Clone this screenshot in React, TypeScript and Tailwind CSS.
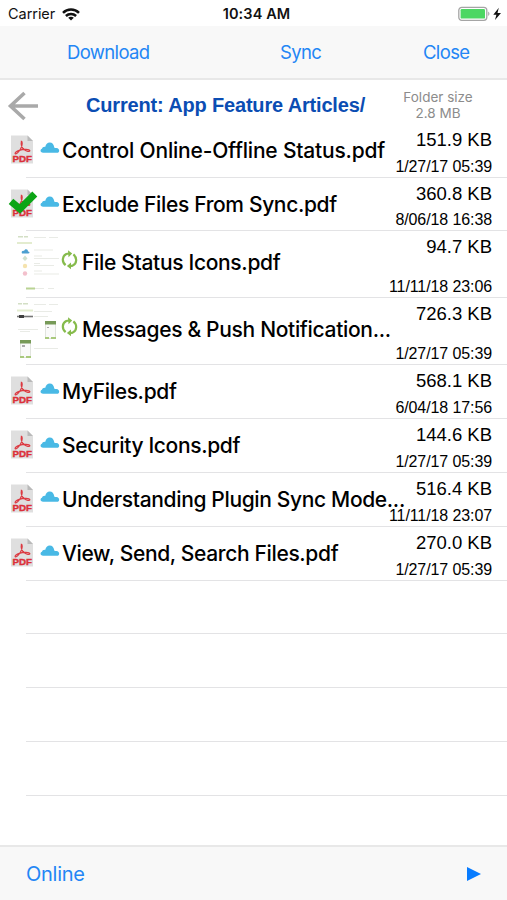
import { clsx } from "clsx";

type FileRow = {
  name: string;
  size: string;
  date: string;
  thumb?: "status" | "messages";
  checked?: boolean;
  height: string;
  tracking?: string;
};

const files: FileRow[] = [
  { name: "Control Online-Offline Status.pdf", size: "151.9 KB", date: "1/27/17 05:39", height: "h-[54px]", tracking: "tracking-[-0.2px]" },
  { name: "Exclude Files From Sync.pdf", size: "360.8 KB", date: "8/06/18 16:38", checked: true, height: "h-[53px]" },
  { name: "File Status Icons.pdf", size: "94.7 KB", date: "11/11/18 23:06", thumb: "status", height: "h-[67px]" },
  { name: "Messages & Push Notification...", size: "726.3 KB", date: "1/27/17 05:39", thumb: "messages", height: "h-[67px]" },
  { name: "MyFiles.pdf", size: "568.1 KB", date: "6/04/18 17:56", height: "h-[54px]" },
  { name: "Security Icons.pdf", size: "144.6 KB", date: "1/27/17 05:39", height: "h-[54px]" },
  { name: "Understanding Plugin Sync Mode...", size: "516.4 KB", date: "11/11/18 23:07", height: "h-[54px]" },
  { name: "View, Send, Search Files.pdf", size: "270.0 KB", date: "1/27/17 05:39", height: "h-[54px]" },
];

const emptyRows = ["h-[53px]", "h-[54px]", "h-[54px]", "h-[54px]"];

function WifiIcon() {
  return (
    <svg width="18" height="13" viewBox="0 0 18 13" fill="none" stroke="#111" strokeWidth="2.5">
      <path d="M1 4.9C5.4.5 12.6.5 17 4.9" />
      <path d="M3.9 8C6.8 5.2 11.2 5.2 14.1 8" />
      <path d="M9 12.6 6.2 9.8c1.6-1.5 4-1.5 5.6 0z" fill="#111" stroke="none" />
    </svg>
  );
}

function BatteryIcon() {
  return (
    <svg width="44" height="16" viewBox="0 0 44 16">
      <rect x="0.8" y="1.3" width="28" height="13" rx="3" fill="#fff" stroke="#a5a5a5" strokeWidth="1.3" />
      <rect x="2.6" y="3" width="24.4" height="9.6" rx="1.2" fill="#4cd763" />
      <path d="M30.2 5.6c1.7.7 1.7 3.8 0 4.5z" fill="#a5a5a5" />
      <path d="M40.8 1.8 35.3 8.8h3.1l-1.4 5.3 6-7.2h-3.5z" fill="#111" />
    </svg>
  );
}

function PdfIcon({ checked }: { checked?: boolean }) {
  return (
    <svg width="30" height="30" viewBox="0 0 30 30" className="shrink-0">
      <path d="M3 .5h16.500l5.500 5.500V28.500H3z" fill="#dfdfdf" />
      <path d="M19.500.5v5.500H25z" fill="#b9b9b9" />
      <path
        d="M13.400 6.300C12.800 9.500 13.900 12.900 16.400 14.700 18.500 16.400 21.500 17 21.900 15.800 21.600 14.100 15.300 13.800 11.300 15.400 8.800 16.400 6.500 17.800 7.200 18.700 8.400 19.500 12 16 13.400 12.200 14.200 9.900 14.700 6.600 13.400 6.300z"
        fill="none"
        stroke="#dc3a42"
        strokeWidth="1.200"
      />
      <text x="14.200" y="27" textAnchor="middle" textLength="19.500" lengthAdjust="spacingAndGlyphs" fontFamily="Liberation Sans, sans-serif" fontWeight="700" fontSize="9.200" fill="#dc2f39" stroke="#dc2f39" strokeWidth="0.400">
        PDF
      </text>
      {checked && <path d="M3 12.400 11.900 20 26.800 5" fill="none" stroke="#0ca516" strokeWidth="7" />}
    </svg>
  );
}

function CloudIcon() {
  return (
    <svg width="20" height="13" viewBox="0 0 20 13" className="shrink-0">
      <path d="M3.2 10.8H17c2.800-.2 3.200-4.100-.6-4.700-.9-.1-1.400-.2-2-.4C13.800 2.500 12.200.6 9.800.6c-2.500 0-4 1.900-4.500 4.200-2-.2-3 .8-3.300 2C-.1 7.700-.1 10.300 3.200 10.800z" fill="#49b9e5" />
    </svg>
  );
}

function SyncIcon() {
  return (
    <svg width="18" height="20" viewBox="0 0 18 20" className="shrink-0" fill="none" stroke="#86bb4c" strokeWidth="2.200">
      <path d="M4.600 15.200C.6 11.900 1 6 5.300 4L8 3.500" />
      <path d="M12.400 4.400c4 3.300 3.600 9.200-.7 11.200L9 16.100" />
      <path d="M7 .3 11.200 3.500 7.500 7.200zM10 12.400 5.900 16.100l4.100 3.200z" fill="#86bb4c" stroke="none" />
    </svg>
  );
}

function StatusThumb() {
  return (
    <svg width="44" height="60" viewBox="0 0 44 60" className="shrink-0">
      <path d="M17 1h12v1H17zM32 1h9v1h-9zM17 13.500h19v1H17zM17 19.500h8v1h-8zM17 22h25v1H17zM17 27h6v1h-6zM17 29h20v1H17zM17 34.500h8v1h-8zM17 37.500h25v1H17zM17 52h10v1H17zM31 52h6v1h-6z" fill="#e9ebe6" />
      <path d="M1 0h5v1.500H1zM7 0h4v1.500H7z" fill="#d3dfc5" />
      <path d="M0 6h15v2H0z" fill="#e3eccf" />
      <path d="M9 51.500h9v2H9z" fill="#b9d393" />
      <path d="M5 17.500c-1-2 .5-3 2-2.500 1-2.500 4-2 4 .5 2 0 2 2 0 2z" fill="#4c9fd0" />
      <path d="m8 19.500 2.500 3-2.500 2.500-2.500-2.500z" fill="#cfe0cd" />
      <circle cx="8" cy="30" r="2.200" fill="#f5e3ae" />
      <circle cx="8" cy="37.500" r="2.200" fill="#f3c0cc" />
    </svg>
  );
}

function MessagesThumb() {
  return (
    <svg width="44" height="60" viewBox="0 0 44 60" className="shrink-0">
      <path d="M1 0h4v1.500H1zM6 0h5v1.500H6z" fill="#d3dfc5" />
      <path d="M17 1h12v1H17zM32 1h9v1h-9zM17 8h18v1H17zM17 13h14v1H17zM1 26h20v1H1zM3 28h10v1H3zM17 45h24v1H17z" fill="#e9ebe6" />
      <path d="M0 6.500h16v2H0z" fill="#e3eccf" />
      <path d="M0 12.700h16v1.600H0z" fill="#777" />
      <path d="M2 12h5v3H2z" fill="#3f3f3f" />
      <path d="M28.500 18.500h10v17h-10zM3.500 37.500h10v17h-10z" fill="#fafafa" stroke="#e1e4de" />
      <path d="M28 18h11v3.500H28zM3 37h11v3.500H3z" fill="#779a58" />
      <path d="M28 34h4v2h-4zM34 34h5v2h-5zM3 53h4v2H3zM9 53h5v2H9z" fill="#a9c97d" />
      <path d="M30 24h2v1h-2zM5 42h3v2H5z" fill="#aaa" />
    </svg>
  );
}

function Row({ file }: { file: FileRow }) {
  return (
    <div className={clsx("relative flex flex-col justify-end", file.height)}>
      <div className="absolute inset-0 flex text-[21px] leading-[32px] font-medium whitespace-nowrap">
        {file.thumb ? (
          <>
            <div className="ml-[17px] mt-[5px]">
              {file.thumb === "status" ? <StatusThumb /> : <MessagesThumb />}
            </div>
            <div className="mt-[19px]">
              <SyncIcon />
            </div>
            <span className="ml-[3px] mt-[16px] tracking-[-0.32px]">{file.name}</span>
          </>
        ) : (
          <>
            <div className="ml-[8px] mt-[11px]">
              <PdfIcon checked={file.checked} />
            </div>
            <div className="ml-[2px] mt-[18px]">
              <CloudIcon />
            </div>
            <span className={clsx("ml-[2px] mt-[11px]", file.tracking ?? "tracking-[-0.35px]")}>{file.name}</span>
          </>
        )}
      </div>
      <div className="absolute inset-y-0 right-[15px] flex flex-col items-end justify-between pt-[6px] pb-[2px] font-['Liberation_Sans',sans-serif] whitespace-nowrap">
        <span className="text-[18.5px] leading-[20px]">{file.size}</span>
        <span className="text-[16px] leading-[18px] tracking-[-0.1px]">{file.date}</span>
      </div>
      <div className="ml-[26px] h-px bg-[#e3e3e5]" />
    </div>
  );
}

export default function App() {
  return (
    <div className="flex h-[900px] w-[507px] flex-col overflow-hidden bg-white font-['Inter',sans-serif] text-black">
      <div className="grid h-[26px] grid-cols-3 items-center pt-[2px] text-[#111]">
        <div className="flex items-center gap-[7px] pl-[8px]">
          <span className="text-[14.5px] tracking-[-0.05px]">Carrier</span>
          <WifiIcon />
        </div>
        <div className="pl-[6px] text-center text-[14.5px] font-semibold tracking-[0.1px] whitespace-nowrap">10:34 AM</div>
        <div className="flex justify-end pr-[5px]">
          <BatteryIcon />
        </div>
      </div>

      <div className="flex h-[54px] items-center border-b-2 border-[#e8e8e8] bg-[#f8f8f8] pt-px text-[18.5px] tracking-[-0.65px] text-[#2386f5]">
        <button className="ml-[67px] w-[213px] text-left">Download</button>
        <button className="w-[143px] text-left">Sync</button>
        <button>Close</button>
      </div>

      <div className="flex h-[44px] items-center">
        <svg width="32" height="30" viewBox="0 0 32 30" className="ml-[7px] mt-[8px]" fill="none" stroke="#a9a9a9" strokeWidth="3.6">
          <path d="M31 15H4M17.5 2 3.5 15l14 13" />
        </svg>
        <h1 className="ml-[47px] mt-[5px] w-[317px] font-['Liberation_Sans',sans-serif] text-[20px] font-bold tracking-[-0.17px] whitespace-nowrap text-[#0b4db3]">
          Current: App Feature Articles/
        </h1>
        <div className="mt-[6px] w-[70px] text-center text-[13.5px] leading-[16px] whitespace-nowrap text-[#8c8c8c]">
          <div>Folder size</div>
          <div>2.8 MB</div>
        </div>
      </div>

      <div className="flex-1">
        {files.map((file) => (
          <Row key={file.name} file={file} />
        ))}
        {emptyRows.map((height, i) => (
          <div key={i} className={clsx("flex flex-col justify-end", height)}>
            <div className="ml-[26px] h-px bg-[#e3e3e5]" />
          </div>
        ))}
      </div>

      <div className="flex h-[55px] items-center justify-between border-t-2 border-[#e8e8e8] bg-[#f8f8f8] pr-[26px] pl-[26px]">
        <span className="text-[20px] tracking-[-0.25px] text-[#2386f5]">Online</span>
        <svg width="14" height="14" viewBox="0 0 14 14">
          <path d="M0 0 14 7 0 14z" fill="#087cff" />
        </svg>
      </div>
    </div>
  );
}
